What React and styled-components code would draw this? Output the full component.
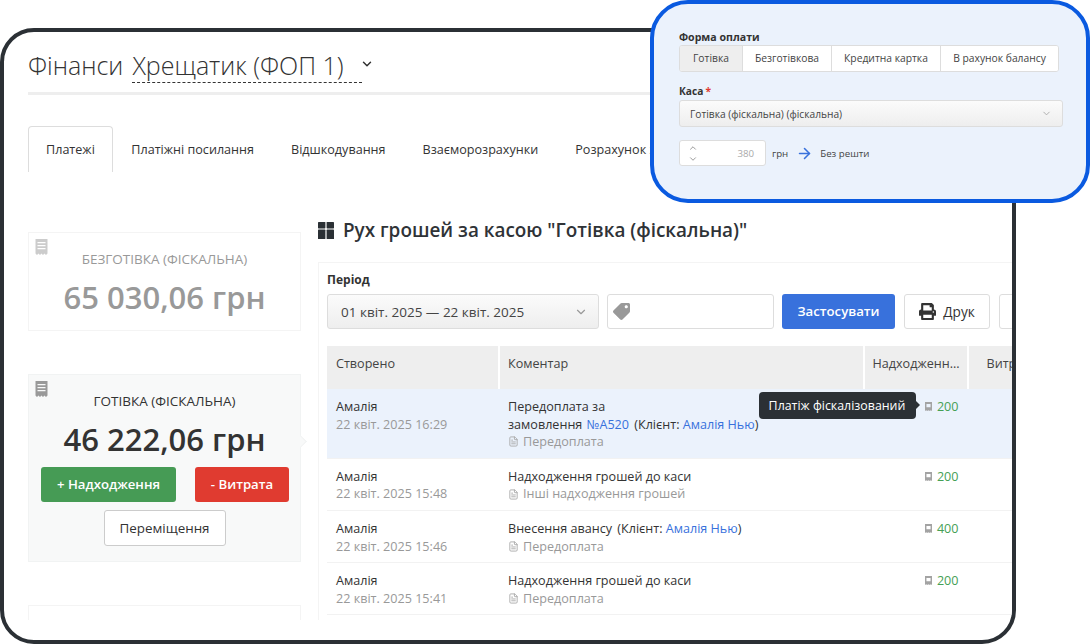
import React from "react";
import styled, { createGlobalStyle } from "styled-components";
import { FaPrint, FaTag } from "react-icons/fa";
import { ChevronDown, ChevronUp, ArrowRight, FileText } from "lucide-react";

const GlobalStyle = createGlobalStyle`
  html, body {
    margin: 0;
    padding: 0;
    background: #fff;
    overflow: hidden;
  }
  * {
    box-sizing: border-box;
  }
  body {
    font-family: "Open Sans", "Liberation Sans", sans-serif;
    font-size: 12.6px;
    color: #333;
  }
`;

const Page = styled.div`
  position: relative;
  width: 1092px;
  height: 644px;
  padding-top: 28px;
`;

const Frame = styled.div`
  width: 1016px;
  height: 616px;
  border: 4px solid #2b3035;
  border-radius: 34px;
  background: #fff;
  overflow: hidden;
`;

const Clip = styled.div`
  height: 588px;
  padding: 0 0 0 24px;
  overflow: hidden;
`;

const TitleRow = styled.div`
  display: flex;
  align-items: flex-start;
  height: 63px;
  margin-right: 24px;
  padding-top: 16px;
  border-bottom: 3px solid #eeeeee;
  font-size: 25px;
  font-weight: 300;
  line-height: 35px;
`;

const TitleSelect = styled.span`
  display: inline-block;
  width: 230px;
  height: 35px;
  margin-left: 9px;
  border-bottom: 1px dashed #333;
  white-space: nowrap;
`;

const TitleChevron = styled(ChevronDown)`
  margin: 9px 0 0 -2px;
  color: #333;
`;

const Tabs = styled.div`
  display: flex;
  height: 46px;
  margin: 31px 24px 0 0;
  border-bottom: 2px solid #dddddd;
`;

const Tab = styled.div`
  flex-shrink: 0;
  height: 46px;
  padding: 0 ${(p) => (p.$active ? "17px" : "17.5px")};
  border: 1px solid ${(p) => (p.$active ? "#dddddd" : "transparent")};
  border-bottom: 0;
  border-radius: 4px 4px 0 0;
  background: #fff;
  line-height: 46px;
  white-space: nowrap;
`;

const Columns = styled.div`
  display: flex;
  align-items: flex-start;
  gap: 17px;
  margin-top: 45px;
`;

const Sidebar = styled.div`
  flex: 0 0 273px;
  margin-top: 15px;
`;

const CashCard = styled.div`
  position: relative;
  margin-bottom: 43px;
  padding: ${(p) => (p.$active ? "17px 0 15px" : "17px 0 11px")};
  border: 1px solid ${(p) => (p.$active ? "#f1f3f3" : "#f4f4f4")};
  background: ${(p) => (p.$active ? "#f8f9f9" : "#fff")};
  color: ${(p) => (p.$active ? "#333" : "#999")};
  text-align: center;

  ${(p) =>
    p.$active &&
    `&::after {
      content: "";
      position: absolute;
      top: 62px;
      right: -5px;
      width: 8px;
      height: 8px;
      background: #f8f9f9;
      border-top: 1px solid #f1f3f3;
      border-right: 1px solid #f1f3f3;
      transform: rotate(45deg);
    }`}
`;

const Receipt = styled.svg`
  position: absolute;
  top: 6px;
  left: 6px;
  width: 13px;
  height: 16px;
  fill: ${(p) => (p.$active ? "#999" : "#cccccc")};
`;

const CashLabel = styled.div`
  font-size: 13.5px;
  line-height: 18px;
`;

const CashAmount = styled.div`
  margin-top: 7px;
  font-size: 31px;
  font-weight: 600;
  line-height: 44px;
`;

const CardButtons = styled.div`
  display: flex;
  justify-content: space-between;
  margin: 6px 11px 0 12px;
`;

const ActionButton = styled.div`
  height: 35px;
  width: ${(p) => p.$w};
  border-radius: 3px;
  background: ${(p) => p.$bg};
  color: #fff;
  font-size: 13.2px;
  font-weight: 600;
  line-height: 35px;
  text-align: center;
`;

const MoveButton = styled.div`
  width: 122px;
  height: 36px;
  margin: 8px auto 0;
  border: 1px solid #cccccc;
  border-radius: 3px;
  background: #fff;
  color: #333;
  font-size: 13.4px;
  line-height: 34px;
`;

const Main = styled.div`
  flex: 0 0 780px;
`;

const Heading = styled.h2`
  display: flex;
  align-items: center;
  gap: 9px;
  height: 26px;
  margin: 0 0 19px;
  font-size: 18.9px;
  font-weight: 600;
  color: #2f3337;
  white-space: nowrap;
`;

const GridIcon = styled.svg`
  width: 16px;
  height: 17px;
  fill: #2b3035;
`;

const Panel = styled.div`
  padding: 8px 8px 30px;
  border: 1px solid #f4f4f4;
`;

const FieldLabel = styled.div`
  font-size: ${(p) => p.$size || "12px"};
  font-weight: 700;
  line-height: 17px;
  color: #333;
`;

const FilterRow = styled.div`
  display: flex;
  gap: 8px;
  margin-top: 6px;
`;

const Select = styled.div`
  display: flex;
  align-items: center;
  justify-content: space-between;
  flex-shrink: 0;
  width: ${(p) => p.$w};
  height: ${(p) => p.$h};
  padding: 0 10px 0 ${(p) => p.$pl};
  border: 1px solid #dddddd;
  border-radius: 3px;
  background: linear-gradient(#fbfbfb, #eeeeee);
  color: #444;
  font-size: ${(p) => p.$size};
`;

const TagInput = styled.div`
  display: flex;
  align-items: center;
  width: 167px;
  height: 35px;
  padding-left: 5px;
  border: 1px solid #dddddd;
  border-radius: 3px;
  background: #fff;
  color: #999;
`;

const TagIcon = styled(FaTag)`
  width: 17px;
  height: 17px;
  transform: rotate(90deg);
`;

const ApplyButton = styled.div`
  width: 113px;
  height: 35px;
  border-radius: 3px;
  background: #3871dc;
  color: #fff;
  font-size: 13.2px;
  font-weight: 600;
  line-height: 35px;
  text-align: center;
`;

const OutlineButton = styled.div`
  display: flex;
  align-items: center;
  justify-content: center;
  gap: 7px;
  flex-shrink: 0;
  width: ${(p) => p.$w};
  height: 35px;
  margin-left: 1px;
  border: 1px solid #dddddd;
  border-radius: 3px;
  background: #fff;
  font-size: 13.6px;
  color: #333;
`;

const Table = styled.table`
  width: 740px;
  margin-top: 17px;
  border-collapse: collapse;
  table-layout: fixed;
`;

const Th = styled.th`
  width: ${(p) => p.$w};
  height: 43px;
  padding: 0 4px 8px ${(p) => p.$pl || "8px"};
  border-right: 2px solid #fff;
  background: #eeeeee;
  font-weight: 400;
  text-align: left;
  color: #444;
  white-space: nowrap;
  overflow: hidden;
`;

const Tr = styled.tr`
  background: ${(p) => (p.$active ? "#ebf2fc" : "#fff")};
  border-bottom: 1px solid #f2f2f2;
`;

const Td = styled.td`
  position: relative;
  padding: 9px 9px 7px;
  vertical-align: top;
  line-height: 17.6px;
  text-align: ${(p) => (p.$right ? "right" : "left")};
`;

const Muted = styled.div`
  color: #999;
`;

const Kind = styled.div`
  display: flex;
  align-items: center;
  gap: 4px;
  color: #999;
`;

const KindIcon = styled(FileText)`
  width: 11px;
  height: 11px;
  color: #aaa;
`;

const Link = styled.span`
  margin: 0 ${(p) => p.$after || "0"} 0 ${(p) => p.$before || "0"};
  color: #3871dc;
`;

const Client = styled.span`
  margin-left: 2px;
`;

const Amount = styled.span`
  display: inline-flex;
  align-items: center;
  gap: 5px;
  color: #46a055;
`;

const MiniReceipt = styled.svg`
  width: 7px;
  height: 9px;
  fill: #a3a3a3;
`;

const Tooltip = styled.div`
  position: absolute;
  top: 3px;
  right: 52px;
  width: 157px;
  height: 27px;
  border-radius: 4px;
  background: #2b3035;
  color: #fff;
  font-size: 12.4px;
  line-height: 27px;
  text-align: center;
  white-space: nowrap;

  &::after {
    content: "";
    position: absolute;
    top: 9px;
    right: -4px;
    border-style: solid;
    border-width: 4px 0 4px 4px;
    border-color: transparent transparent transparent #2b3035;
  }
`;

/* блакитна картка поверх сторінки */
const PayCard = styled.div`
  position: absolute;
  top: 0;
  left: 650px;
  width: 440px;
  height: 203px;
  padding: 25px 25px 0;
  border: 4px solid #0a5ae0;
  border-radius: 38px;
  background: #ebf2fc;
`;

const PayLabel = styled(FieldLabel)`
  margin-bottom: -1px;
`;

const Segments = styled.div`
  display: flex;
  width: 380px;
  height: 27px;
  border: 1px solid #dddddd;
  border-radius: 3px;
  background: #fff;
  overflow: hidden;
`;

const Segment = styled.div`
  flex: 0 0 ${(p) => p.$w};
  border-right: 1px solid #dddddd;
  background: ${(p) => (p.$active ? "#eeeeee" : "#fff")};
  color: #444;
  font-size: 10.3px;
  line-height: 25px;
  text-align: center;

  &:last-child {
    border-right: 0;
  }
`;

const CashBoxLabel = styled(FieldLabel)`
  margin-top: 11px;
  margin-bottom: 0;
`;

const Star = styled.span`
  margin-left: 2px;
  color: #e0392f;
`;

const AmountRow = styled.div`
  display: flex;
  align-items: center;
  margin-top: 13px;
  font-size: 9.7px;
  color: #444;
`;

const Spinner = styled.div`
  display: flex;
  align-items: center;
  justify-content: space-between;
  width: 87px;
  height: 26px;
  padding: 0 11px 0 8px;
  border: 1px solid #dddddd;
  border-radius: 3px;
  background: #fff;
  color: #aaa;
`;

const SpinnerArrows = styled.div`
  display: flex;
  flex-direction: column;
  gap: 1px;
  color: #888;
`;

const Unit = styled.span`
  margin-left: 6px;
`;

const BlueArrow = styled(ArrowRight)`
  margin: 0 7px 0 8px;
  color: #3871dc;
`;

const receiptPath =
  "M1 0h12v14.5l-1.5 1.5-1.5-1.5-1.5 1.5L7 14.5 5.5 16 4 14.5 2.5 16 1 14.5zM3 3v1.2h8V3zm0 3v1.2h8V6zm0 3v1.2h8V9z";

const miniReceiptPath =
  "M1 0h12v14.5l-1.5 1.5-1.5-1.5-1.5 1.5L7 14.5 5.5 16 4 14.5 2.5 16 1 14.5zM3.5 3.5v6h7v-6z";

const rows = [
  {
    time: "22 квіт. 2025 15:48",
    text: "Надходження грошей до каси",
    kind: "Інші надходження грошей",
    sum: 200,
  },
  {
    time: "22 квіт. 2025 15:46",
    text: (
      <>
        Внесення авансу <Client>(Клієнт: </Client>
        <Link>Амалія Нью</Link>)
      </>
    ),
    kind: "Передоплата",
    sum: 400,
  },
  {
    time: "22 квіт. 2025 15:41",
    text: "Надходження грошей до каси",
    kind: "Передоплата",
    sum: 200,
  },
];

const SumCell = ({ sum, children }) => (
  <Td $right>
    {children}
    <Amount>
      <MiniReceipt viewBox="1 0 12 16" preserveAspectRatio="none">
        <path d={miniReceiptPath} fillRule="evenodd" />
      </MiniReceipt>
      {sum}
    </Amount>
  </Td>
);

const App = () => {
  return (
    <Page>
      <GlobalStyle />
      <Frame>
        <Clip>
          <TitleRow>
            Фінанси
            <TitleSelect>Хрещатик (ФОП 1)</TitleSelect>
            <TitleChevron size={14} strokeWidth={2.5} />
          </TitleRow>
          <Tabs>
            <Tab $active>Платежі</Tab>
            <Tab>Платіжні посилання</Tab>
            <Tab>Відшкодування</Tab>
            <Tab>Взаєморозрахунки</Tab>
            <Tab>Розрахунок з</Tab>
          </Tabs>
          <Columns>
            <Sidebar>
              <CashCard>
                <Receipt viewBox="1 0 12 16">
                  <path d={receiptPath} />
                </Receipt>
                <CashLabel>БЕЗГОТІВКА (ФІСКАЛЬНА)</CashLabel>
                <CashAmount>65 030,06 грн</CashAmount>
              </CashCard>
              <CashCard $active>
                <Receipt $active viewBox="1 0 12 16">
                  <path d={receiptPath} />
                </Receipt>
                <CashLabel>ГОТІВКА (ФІСКАЛЬНА)</CashLabel>
                <CashAmount>46 222,06 грн</CashAmount>
                <CardButtons>
                  <ActionButton $w="135px" $bg="#469b55">+ Надходження</ActionButton>
                  <ActionButton $w="94px" $bg="#e03b30">- Витрата</ActionButton>
                </CardButtons>
                <MoveButton>Переміщення</MoveButton>
              </CashCard>
              <CashCard>
                <CashLabel>&nbsp;</CashLabel>
              </CashCard>
            </Sidebar>
            <Main>
              <Heading>
                <GridIcon viewBox="0 0 16 17">
                  <rect x="0" y="0" width="7.4" height="6.4" rx="0.6" />
                  <rect x="8.6" y="0" width="7.4" height="6.4" rx="0.6" />
                  <rect x="0" y="7.6" width="7.4" height="9.4" rx="0.6" />
                  <rect x="8.6" y="7.6" width="7.4" height="9.4" rx="0.6" />
                </GridIcon>
                Рух грошей за касою "Готівка (фіскальна)"
              </Heading>
              <Panel>
                <FieldLabel>Період</FieldLabel>
                <FilterRow>
                  <Select $w="272px" $h="35px" $pl="13px" $size="13.5px">
                    01 квіт. 2025 — 22 квіт. 2025
                    <ChevronDown size={14} color="#999" />
                  </Select>
                  <TagInput>
                    <TagIcon />
                  </TagInput>
                  <ApplyButton>Застосувати</ApplyButton>
                  <OutlineButton $w="86px">
                    <FaPrint size={17} />
                    Друк
                  </OutlineButton>
                  <OutlineButton $w="60px" />
                </FilterRow>
                <Table>
                  <thead>
                    <tr>
                      <Th $w="172px" $pl="9px">Створено</Th>
                      <Th $w="364.5px">Коментар</Th>
                      <Th $w="104px">Надходженн...</Th>
                      <Th $w="99.5px" $pl="18px">Витрата</Th>
                    </tr>
                  </thead>
                  <tbody>
                    <Tr $active>
                      <Td>
                        Амалія
                        <Muted>22 квіт. 2025 16:29</Muted>
                      </Td>
                      <Td>
                        Передоплата за
                        <br />
                        замовлення <Link $before="1px" $after="2px">№А520</Link> (Клієнт: <Link>Амалія Нью</Link>)
                        <Kind>
                          <KindIcon />
                          Передоплата
                        </Kind>
                      </Td>
                      <SumCell sum={200}>
                        <Tooltip>Платіж фіскалізований</Tooltip>
                      </SumCell>
                      <Td />
                    </Tr>
                    {rows.map((row) => (
                      <Tr key={row.time}>
                        <Td>
                          Амалія
                          <Muted>{row.time}</Muted>
                        </Td>
                        <Td>
                          {row.text}
                          <Kind>
                            <KindIcon />
                            {row.kind}
                          </Kind>
                        </Td>
                        <SumCell sum={row.sum} />
                        <Td />
                      </Tr>
                    ))}
                  </tbody>
                </Table>
              </Panel>
            </Main>
          </Columns>
        </Clip>
      </Frame>
      <PayCard>
        <PayLabel $size="10.6px">Форма оплати</PayLabel>
        <Segments>
          <Segment $active $w="63px">Готівка</Segment>
          <Segment $w="89px">Безготівкова</Segment>
          <Segment $w="109px">Кредитна картка</Segment>
          <Segment $w="117px">В рахунок балансу</Segment>
        </Segments>
        <CashBoxLabel $size="10.2px">
          Каса<Star>*</Star>
        </CashBoxLabel>
        <Select $w="384px" $h="27px" $pl="10px" $size="10.2px">
          Готівка (фіскальна) (фіскальна)
          <ChevronDown size={11} color="#aaa" />
        </Select>
        <AmountRow>
          <Spinner>
            <SpinnerArrows>
              <ChevronUp size={10} />
              <ChevronDown size={10} />
            </SpinnerArrows>
            380
          </Spinner>
          <Unit>грн</Unit>
          <BlueArrow size={17} strokeWidth={2.2} />
          Без решти
        </AmountRow>
      </PayCard>
    </Page>
  );
};

export default App;
